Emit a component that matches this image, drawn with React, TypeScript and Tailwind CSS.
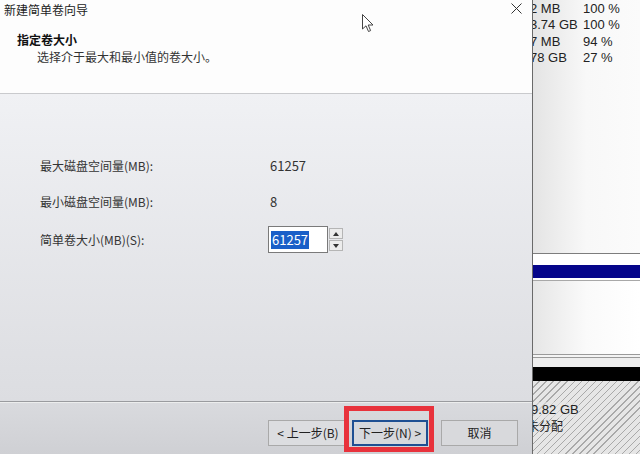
import React from 'react';

const cjk = "font-['Noto_Sans_CJK_SC','Noto_Sans',sans-serif]";

const sizeRows = [
  { label: '最大磁盘空间量(MB):', value: '61257' },
  { label: '最小磁盘空间量(MB):', value: '8' },
];

const volumeRows = [
  { size: '2 MB', free: '100 %' },
  { size: '3.74 GB', free: '100 %' },
  { size: '7 MB', free: '94 %' },
  { size: '78 GB', free: '27 %' },
];

function SpinBox() {
  return (
    <div className="flex h-[27px]">
      <div className="flex h-full w-[60px] items-center border border-[#7a7a7a] bg-white pl-[2px]">
        <span className="bg-[#1a5fc8] px-[1px] text-[13px] leading-[18px] text-white">61257</span>
      </div>
      <div className="flex w-[15px] flex-col justify-center gap-[1px] py-[2px] pl-[1px]">
        <button className="flex h-[11px] items-center justify-center border border-[#b5b5b5] bg-[#ececec]">
          <svg width="6" height="4" viewBox="0 0 6 4">
            <path d="M0 4 L3 0 L6 4 Z" fill="#333" />
          </svg>
        </button>
        <button className="flex h-[11px] items-center justify-center border border-[#b5b5b5] bg-[#ececec]">
          <svg width="6" height="4" viewBox="0 0 6 4">
            <path d="M0 0 L3 4 L6 0 Z" fill="#333" />
          </svg>
        </button>
      </div>
    </div>
  );
}

function Wizard() {
  return (
    <div className={`flex h-full w-[533px] flex-col border-r border-[#6a6a6a] ${cjk}`}>
      {/* header */}
      <div className="h-[94px] border-b border-[#c9cacd] bg-[#fdfdfd]">
        <div className="flex h-[20px] items-center justify-between pl-[4px] pr-[10px]">
          <span className="text-[12px] text-[#222]">新建简单卷向导</span>
          <svg width="11" height="11" viewBox="0 0 11 11" className="-mt-[3px]">
            <path d="M0.5 0.5 L10.5 10.5 M10.5 0.5 L0.5 10.5" stroke="#333" strokeWidth="1" />
          </svg>
        </div>
        <div className="pl-[17px] pt-[12px] text-[12px] font-bold leading-[16px] text-[#111]">指定卷大小</div>
        <div className="pl-[37px] pt-[1px] text-[12px] leading-[16px] text-[#333]">选择介于最大和最小值的卷大小。</div>
      </div>

      {/* body */}
      <div className="flex flex-1 flex-col bg-gradient-to-b from-[#f0f1f4] to-[#dcdde1] pl-[40px] pt-[64px]">
        {sizeRows.map((row) => (
          <div key={row.label} className="mb-[20px] flex h-[16px] items-center text-[12px] text-[#333]">
            <span className="w-[230px]">{row.label}</span>
            <span className="text-[13px]">{row.value}</span>
          </div>
        ))}
        <div className="-mt-[4px] flex items-center text-[12px] text-[#333]">
          <span className="w-[228px]">简单卷大小(MB)(S):</span>
          <SpinBox />
        </div>
      </div>

      {/* footer */}
      <div className="h-[53px] border-t border-[#9a9b9f] bg-gradient-to-b from-[#d9dade] to-[#cfd0d4] shadow-[inset_0_1px_0_#eceded]">
        <div className="flex items-center pl-[268px] pt-[18px] text-[12px] text-[#222]">
          <button className="h-[26px] w-[80px] border border-[#a9a9a9] bg-[#dcdde0]">&lt; 上一步(B)</button>
          <div className="relative ml-[4px]">
            <button className="h-[26px] w-[76px] border-2 border-[#1e4f93] bg-[#d6d8dd]">下一步(N) &gt;</button>
            <span className="pointer-events-none absolute -bottom-[6px] -left-[8px] -right-[6px] -top-[14px] border-[5px] border-[#e8323c]" />
          </div>
          <button className="ml-[13px] h-[26px] w-[77px] border border-[#a9a9a9] bg-[#d8d9dc]">取消</button>
        </div>
      </div>
    </div>
  );
}

function DiskPanel() {
  return (
    <div className="flex h-full flex-1 flex-col overflow-hidden bg-[#f9f9f9] font-['Liberation_Sans','Noto_Sans',sans-serif] text-[13px] text-[#222]">
      <div className="h-[253px] bg-gradient-to-r from-[#e4e4e4] via-[#f8f8f8] to-[#fbfbfb]">
        {volumeRows.map((r) => (
          <div key={r.size} className="flex h-[16.5px] items-center">
            <span className="-ml-[3px] w-[53px] whitespace-nowrap">{r.size}</span>
            <span>{r.free}</span>
          </div>
        ))}
      </div>
      <div className="h-px bg-[#7d7d7d]" />
      <div className="h-[11px] bg-white" />
      <div className="h-[13px] bg-[#05058a]" />
      <div className="h-[2px] bg-white" />
      <div className="h-px bg-[#a8a8a8]" />
      <div className="h-[73px] bg-gradient-to-r from-[#e6e6e6] via-[#fafafa] to-white" />
      <div className="h-px bg-[#9a9a9a]" />
      <div className="h-[2px] bg-[#f4f4f4]" />
      <div className="h-px bg-[#9a9a9a]" />
      <div className="h-[9px] bg-[#eeeeee]" />
      <div className="h-[14px] bg-black" />
      <div className="flex-1 bg-[repeating-linear-gradient(135deg,#e6e6e6_0px,#e6e6e6_4px,#a9a9a9_4px,#a9a9a9_5px)] pt-[21px] text-[13px] leading-[16px]">
        <div className="-ml-[2px] w-fit bg-[#e6e6e6]/60">9.82 GB</div>
        <div className={`-ml-[6px] w-fit ${cjk} text-[12px]`}>未分配</div>
      </div>
    </div>
  );
}

export default function App() {
  return (
    <div className="relative flex h-[454px] w-[640px] overflow-hidden bg-white">
      <Wizard />
      <DiskPanel />
      {/* mouse pointer */}
      <svg className="absolute left-[362px] top-[14px]" width="12" height="19" viewBox="0 0 12 19">
        <path d="M0.5 0.5 L0.5 15 L4 11.8 L6.5 17.5 L8.6 16.6 L6.2 11 L11 11 Z" fill="white" stroke="#444" strokeWidth="1" strokeLinejoin="round" />
      </svg>
    </div>
  );
}
